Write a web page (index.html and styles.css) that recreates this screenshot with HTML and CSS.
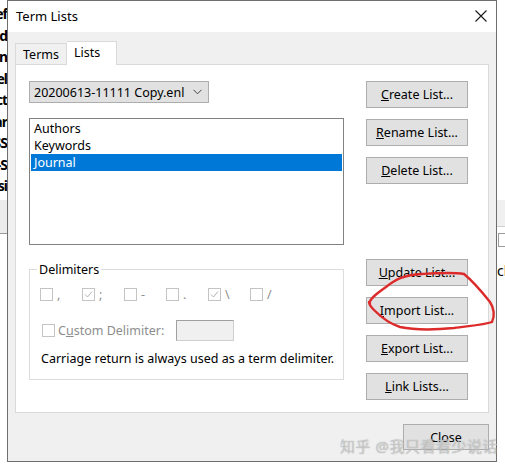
FILE: index.html
```html
<!DOCTYPE html>
<html lang="en">
<head>
  <meta charset="UTF-8">
  <title>Term Lists</title>
  <link rel="stylesheet" href="styles.css">
</head>
<body>
  <div class="desktop">
    <div class="behind-left">
      <div class="row">Pref</div>
      <div class="row">Find</div>
      <div class="row">Open</div>
      <div class="row">Sel</div>
      <div class="row">Sect</div>
      <div class="row">Year</div>
      <div class="row">ISS</div>
      <div class="row">E-S</div>
      <div class="row">Basi</div>
      <div class="band"></div>
    </div>

    <div class="dialog">
      <div class="titlebar">
        <span class="title">Term Lists</span>
        <svg class="close-x" width="12" height="12" viewBox="0 0 12 12">
          <path d="M0.5 0.5 L11.5 11.5 M11.5 0.5 L0.5 11.5" stroke="#1a1a1a" stroke-width="1.1" fill="none"/>
        </svg>
      </div>

      <div class="dialog-body">
        <div class="tabs">
          <div class="tab">Terms</div>
          <div class="tab active">Lists</div>
        </div>

        <div class="panel">
          <div class="left-col">
            <div class="dropdown">
              <span>20200613-11111 Copy.enl</span>
              <svg width="9" height="6" viewBox="0 0 9 6">
                <path d="M0.5 0.8 L4.5 4.8 L8.5 0.8" stroke="#444" stroke-width="1" fill="none"/>
              </svg>
            </div>

            <div class="listbox">
              <div class="item">Authors</div>
              <div class="item">Keywords</div>
              <div class="item selected">Journal</div>
            </div>

            <fieldset class="group">
              <legend>Delimiters</legend>
              <div class="check-row">
                <label class="check"><span class="box"></span><span>,</span></label>
                <label class="check"><span class="box"><svg width="11" height="11" viewBox="0 0 11 11"><path d="M2 5.5 L4.5 8 L9 2.5" stroke="#b5b5b5" stroke-width="1" fill="none"/></svg></span><span>;</span></label>
                <label class="check"><span class="box"></span><span>-</span></label>
                <label class="check"><span class="box"></span><span>.</span></label>
                <label class="check"><span class="box"><svg width="11" height="11" viewBox="0 0 11 11"><path d="M2 5.5 L4.5 8 L9 2.5" stroke="#b5b5b5" stroke-width="1" fill="none"/></svg></span><span>\</span></label>
                <label class="check"><span class="box"></span><span>/</span></label>
              </div>
              <div class="custom-row">
                <label class="check"><span class="box"></span><span>C<u>u</u>stom Delimiter:</span></label>
                <span class="custom-input"></span>
              </div>
              <p class="note">Carriage return is always used as a term delimiter.</p>
            </fieldset>
          </div>

          <div class="right-col">
            <button class="btn"><u>C</u>reate List...</button>
            <button class="btn"><u>R</u>ename List...</button>
            <button class="btn"><u>D</u>elete List...</button>
            <button class="btn spaced"><u>U</u>pdate List...</button>
            <button class="btn"><u>I</u>mport List...</button>
            <button class="btn"><u>E</u>xport List...</button>
            <button class="btn"><u>L</u>ink Lists...</button>
          </div>
        </div>

        <div class="footer">
          <button class="btn close-btn">Close</button>
        </div>
      </div>

      <!-- hand-drawn mark around Import List -->
      <svg class="scribble" width="140" height="70" viewBox="0 0 140 70">
        <path d="M6 36 C4 32 12 26 22 19 C32 11 40 7 58 6 C74 5 88 4 100 6 C110 14 118 24 126 34 C130 40 131 48 128 54 C120 57 104 58 90 60 C70 62 50 62 36 59 C26 56 18 50 10 42 C6 38 5 36 5 34"
              stroke="#dd2b2b" stroke-width="2.4" fill="none" stroke-linecap="round"/>
      </svg>

      <div class="watermark">知乎 @我只看看少说话</div>
    </div>

    <div class="behind-right">
      <div class="band"></div>
      <div class="arrow"></div>
      <div class="frag">ch</div>
    </div>
  </div>
</body>
</html>
```

FILE: styles.css
```css
* {
  box-sizing: border-box;
}
body {
  margin: 0;
  background: #fff;
  font-family: "Noto Sans", "Noto Sans CJK SC", sans-serif;
  font-size: 12.5px;
  color: #000;
  overflow: hidden;
}
.desktop {
  display: flex;
  width: 505px;
  height: 469px;
}

/* windows peeking out behind the dialog */
.behind-left {
  flex: 0 0 7px;
  overflow: hidden;
  display: flex;
  flex-direction: column;
  padding-top: 4px;
}
.behind-left .row {
  display: flex;
  justify-content: flex-end;
  height: 21.5px;
  font-weight: bold;
  font-size: 14px;
  letter-spacing: -1px;
  white-space: nowrap;
}
.behind-left .band {
  margin-top: 2px;
  height: 34px;
  background: #ececec;
  border-bottom: 1px solid #9a9a9a;
}
.behind-right {
  flex: 1;
  overflow: hidden;
  padding-top: 200px;
}
.behind-right .band {
  height: 27px;
  background: #f0f0f0;
  border-bottom: 1px solid #d0d0d0;
}
.behind-right .arrow {
  margin: 6px 0 0 1px;
  width: 12px;
  height: 14px;
  border: 1px solid #9a9a9a;
  border-right: none;
}
.behind-right .frag {
  margin-top: 14px;
  font-size: 14px;
  white-space: nowrap;
}

/* dialog */
.dialog {
  position: relative;
  flex: 0 0 490px;
  height: 462px;
  border: 1px solid #6f6f6f;
  background: #f0f0f0;
  display: flex;
  flex-direction: column;
}
.titlebar {
  height: 31px;
  background: #fff;
  display: flex;
  align-items: center;
  justify-content: space-between;
  padding: 0 8px 2px 8px;
}
.title {
  font-size: 13px;
}
.close-x {
  margin-right: 1px;
}
.dialog-body {
  flex: 1;
  padding: 8px 7px 0 7px;
}
.tabs {
  display: flex;
  align-items: flex-end;
  height: 24px;
}
.tab {
  height: 21px;
  padding: 1px 7px 0 7px;
  border: 1px solid #d9d9d9;
  border-bottom: none;
  background: #f0f0f0;
  line-height: 19px;
}
.tab.active {
  height: 24px;
  width: 50px;
  padding-top: 0;
  margin-bottom: -1px;
  background: #fff;
  border-left: none;
  position: relative;
  line-height: 22px;
}
.panel {
  height: 349px;
  background: #fff;
  border: 1px solid #d9d9d9;
  padding: 16px 18px 0 13px;
  display: flex;
  gap: 22px;
}

.left-col {
  width: 315px;
  display: flex;
  flex-direction: column;
}
.dropdown {
  width: 180px;
  height: 22px;
  background: #e1e1e1;
  border: 1px solid #adadad;
  display: flex;
  align-items: center;
  justify-content: space-between;
  padding: 0 6px 0 4px;
}
.listbox {
  margin-top: 15px;
  height: 127px;
  border: 1px solid #828282;
  padding: 1px;
}
.item {
  height: 17px;
  line-height: 17px;
  padding-left: 3px;
}
.item.selected {
  background: #0078d7;
  color: #fff;
}
.group {
  margin: 16px 0 0 0;
  height: 119px;
  border: 1px solid #dcdcdc;
  padding: 8px 0 0 10px;
}
.group legend {
  padding: 0 2px;
  margin-left: -3px;
}
.check-row {
  display: flex;
}
.check {
  display: flex;
  align-items: center;
  gap: 4px;
  color: #8d8d8d;
  width: 42px;
  height: 16px;
}
.box {
  width: 13px;
  height: 13px;
  border: 1px solid #c4c4c4;
  background: #fff;
  display: flex;
  align-items: center;
  justify-content: center;
}
.custom-row {
  display: flex;
  align-items: center;
  margin-top: 18px;
  margin-left: 2px;
}
.custom-row .check {
  width: auto;
  gap: 3px;
}
.custom-input {
  margin-left: 12px;
  width: 58px;
  height: 21px;
  background: #f0f0f0;
  border: 1px solid #cfcfcf;
  border-top-color: #a0a0a0;
  border-left-color: #a0a0a0;
}
.note {
  margin: 9px 0 0 1px;
}

.right-col {
  width: 102px;
  display: flex;
  flex-direction: column;
  gap: 11px;
}
.btn {
  height: 27px;
  background: #e1e1e1;
  border: 1px solid #adadad;
  font-family: inherit;
  font-size: 12.5px;
  color: #000;
  padding: 0;
}
.btn.spaced {
  margin-top: 64px;
}
.footer {
  display: flex;
  justify-content: flex-end;
  margin-top: 11px;
}
.close-btn {
  width: 86px;
  height: 26px;
}

/* overlays */
.scribble {
  position: absolute;
  left: 356px;
  top: 267px;
}
.watermark {
  position: absolute;
  left: 332px;
  top: 434px;
  font-size: 15px;
  color: rgba(255, 255, 255, 0.45);
  text-shadow: 0 0 1px #8c8c8c;
  letter-spacing: 0.5px;
  white-space: nowrap;
}
```
